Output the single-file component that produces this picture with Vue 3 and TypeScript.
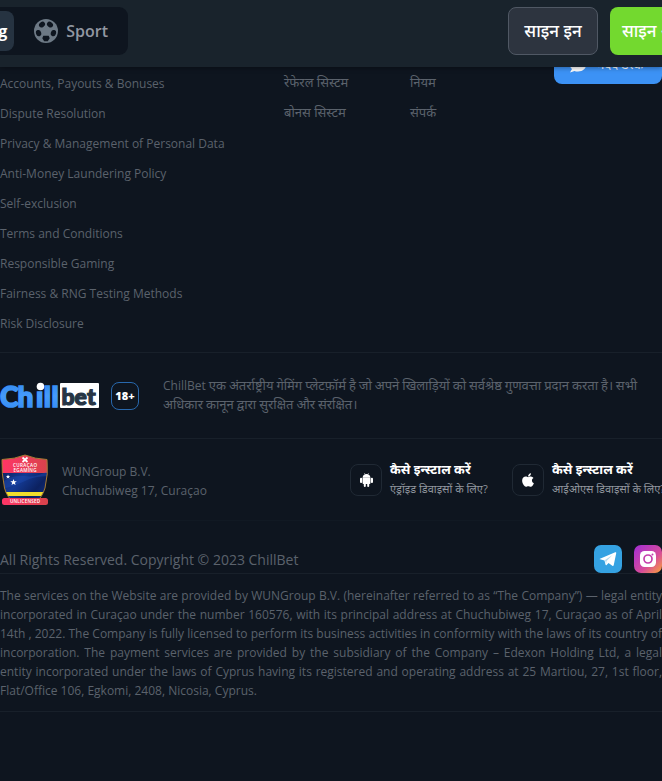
<script setup lang="ts">
interface InstallLink { id: 'android' | 'apple'; title: string; note: string }

const policies: string[] = [
  'Accounts, Payouts & Bonuses',
  'Dispute Resolution',
  'Privacy & Management of Personal Data',
  'Anti-Money Laundering Policy',
  'Self-exclusion',
  'Terms and Conditions',
  'Responsible Gaming',
  'Fairness & RNG Testing Methods',
  'Risk Disclosure',
]
const programs: string[] = ['रेफेरल सिस्टम', 'बोनस सिस्टम']
const info: string[] = ['नियम', 'संपर्क']
const installs: InstallLink[] = [
  { id: 'android', title: 'कैसे इन्स्टाल करें', note: 'एंड्रॉइड डिवाइसों के लिए?' },
  { id: 'apple', title: 'कैसे इन्स्टाल करें', note: 'आईओएस डिवाइसों के लिए?' },
]
</script>

<template>
  <div class="page">
    <header class="topbar">
      <nav class="tabs">
        <a class="tab tab-active">iGaming</a>
        <a class="tab">
          <svg class="ball" viewBox="0 0 24 24">
            <circle cx="12" cy="12" r="12" fill="#6d7985" />
            <g fill="#0e151f">
              <ellipse cx="8" cy="5.6" rx="3.2" ry="2.6" transform="rotate(-35 8 5.6)" />
              <ellipse cx="16" cy="5.6" rx="3.2" ry="2.6" transform="rotate(35 16 5.6)" />
              <ellipse cx="4.6" cy="14.1" rx="2.6" ry="3.2" transform="rotate(-18 4.6 14.1)" />
              <ellipse cx="19.4" cy="14.1" rx="2.6" ry="3.2" transform="rotate(18 19.4 14.1)" />
              <path d="M9.3 16.7h5.4l1 2.6-1.9 2.9h-3.6l-1.9-2.9z" />
            </g>
          </svg>
          <span>Sport</span>
        </a>
      </nav>
      <div class="auth">
        <button class="btn btn-in"><span>साइन इन</span></button>
        <button class="btn btn-up"><span>साइन अप</span></button>
      </div>
    </header>

    <footer class="footer">
      <section class="columns">
        <ul class="col col-policy">
          <li v-for="p in policies" :key="p">{{ p }}</li>
        </ul>
        <ul class="col col-program hi">
          <li v-for="p in programs" :key="p"><span>{{ p }}</span></li>
        </ul>
        <ul class="col col-info hi">
          <li v-for="p in info" :key="p"><span>{{ p }}</span></li>
        </ul>
        <a class="support">
          <svg width="18" height="16" viewBox="0 0 18 16"><path d="M9 0c5 0 8.400 3 8.400 7S14 14.500 9 14.500c-1.500 0-2.500 0-3.500-.5L1 15.500l2-3.500C1.500 10.800.6 9 .6 7 .6 3 4 0 9 0z" fill="#fff" /></svg>
          <span>मदद डेस्क</span>
        </a>
      </section>

      <section class="about">
        <svg class="logo" width="100" height="28" viewBox="0 0 100 28">
          <defs>
            <linearGradient id="chill" x1="0" y1="0" x2="0" y2="1">
              <stop offset="0" stop-color="#2f86ee" />
              <stop offset=".5" stop-color="#459bfb" />
              <stop offset="1" stop-color="#3289f2" />
            </linearGradient>
          </defs>
          <rect x="60" y="1" width="39" height="25" rx="1" fill="#fff" />
          <text class="logo-a" x="0 17.500 36 43.800 51.500" y="25" fill="url(#chill)" stroke="url(#chill)">Chıll</text>
          <circle cx="40.500" cy="4.500" r="3.800" fill="#fff" />
          <text class="logo-b" x="61.500 74.500 87" y="23" fill="#263545" stroke="#263545">bet</text>
        </svg>
        <span class="age">18+</span>
        <p class="about-text"><span class="brand">ChillBet</span> एक अंतर्राष्ट्रीय गेमिंग प्लेटफ़ॉर्म है जो अपने खिलाड़ियों को सर्वश्रेष्ठ गुणवत्ता प्रदान करता है। सभी<br>अधिकार कानून द्वारा सुरक्षित और संरक्षित।</p>
      </section>

      <section class="company">
        <svg class="license" width="48" height="52" viewBox="0 0 48 52">
          <defs>
            <linearGradient id="red" x1="0" x2="1"><stop offset="0" stop-color="#ff3566" /><stop offset="1" stop-color="#d8434b" /></linearGradient>
            <linearGradient id="blue" x1="0" x2="1" y2="1"><stop offset="0" stop-color="#0a1440" /><stop offset=".45" stop-color="#143a94" /><stop offset=".7" stop-color="#0c2160" /><stop offset="1" stop-color="#123690" /></linearGradient>
            <clipPath id="shield"><path d="M1 5.500Q14 5 24 1q10 4 22 4.500Q47.500 20 44 34 41 44 34 49H14Q6 44 3.500 34 .5 20 1 5.500z" /></clipPath>
          </defs>
          <g clip-path="url(#shield)">
            <rect width="48" height="52" fill="url(#blue)" />
            <rect width="48" height="19" fill="url(#red)" />
            <path d="M0 29Q12 20 24 22T48 16v6Q34 22 24 27T0 35z" fill="#2353bd" opacity=".35" />
            <path d="M0 38h48v4H0z" fill="#f1df2c" />
          </g>
          <path d="M1 5.500Q14 5 24 1q10 4 22 4.500Q47.500 20 44 34 41 44 34 49H14Q6 44 3.500 34 .5 20 1 5.500z" fill="none" stroke="#a77a32" />
          <path d="M21.500 3.500l5 4.500m0-4.500l-5 4.500" stroke="#fff" stroke-width="1.700" />
          <text x="12" y="13" class="seal" textLength="24" fill="#fff">CURAÇAO</text>
          <text x="12.500" y="18" class="seal" textLength="23" fill="#fff">EGAMING</text>
          <path d="M12.500 25l.9 2.200 2.400.1-1.900 1.500.7 2.300-2.100-1.300-2 1.300.7-2.300-1.900-1.500 2.400-.1z" fill="#fff" />
          <path d="M7 20.500l.6 1.500 1.600.1-1.300 1 .5 1.500L7 23.700l-1.300.9.4-1.500-1.200-1 1.600-.1z" fill="#fff" />
          <rect x="1" y="44" width="46" height="7" rx="2.500" fill="url(#red)" />
          <text x="9" y="49.300" class="seal" textLength="30" fill="#fff">UNLICENSED</text>
        </svg>
        <address class="address">WUNGroup B.V.<br>Chuchubiweg 17, Curaçao</address>
        <div class="installs">
          <a v-for="item in installs" :key="item.id" class="install" :class="item.id">
            <span class="install-icon">
              <svg v-if="item.id === 'android'" width="13" height="14" viewBox="0 0 13 14" fill="#fff">
                <path d="M2.700 4.300C2.700 2.500 4.300 1 6.500 1s3.800 1.500 3.800 3.300z" />
                <path d="M4.300 0l.9 1.400M8.700 0l-.9 1.400" stroke="#fff" stroke-width=".5" />
                <path d="M2.600 4.300h7.800v5.900c0 .5-.3.800-.8.800H3.400c-.5 0-.8-.3-.8-.8z" />
                <rect x="0" y="4.700" width="2.200" height="5.300" rx="1" /><rect x="10.800" y="4.700" width="2.200" height="5.300" rx="1" />
                <rect x="3.800" y="9" width="2" height="5" rx="1" /><rect x="7.200" y="9" width="2" height="5" rx="1" />
              </svg>
              <svg v-else width="12" height="14" viewBox="0 20 384 470" preserveAspectRatio="none" fill="#fff">
                <path d="M318.700 268.700c-.2-36.700 16.400-64.400 50-84.800-18.800-26.900-47.200-41.700-84.700-44.600-35.500-2.800-74.300 20.700-88.500 20.700-15 0-49.400-19.700-76.400-19.700C63.300 141.200 4 184.800 4 273.500q0 39.300 14.400 81.200c12.800 36.700 59 126.700 107.200 125.200 25.200-.6 43-17.900 75.800-17.900 31.800 0 48.300 17.900 76.400 17.900 48.600-.7 90.400-82.500 102.600-119.300-65.200-30.700-61.700-90-61.700-91.900zm-56.600-164.200c27.300-32.400 24.800-61.900 24-72.500-24.100 1.400-52 16.400-67.900 34.900-17.500 19.800-27.800 44.300-25.600 71.900 26.100 2 49.900-11.400 69.500-34.300z" />
              </svg>
            </span>
            <span class="install-text"><b>{{ item.title }}</b><small>{{ item.note }}</small></span>
          </a>
        </div>
      </section>

      <section class="rights">
        <span>All Rights Reserved. Copyright © 2023 ChillBet</span>
        <div class="social">
          <svg width="28" height="28" viewBox="0 0 28 28">
            <rect width="28" height="28" rx="7" fill="#35a2e2" />
            <path d="M6 13.700L21.200 7.300c.7-.3 1.200.1 1 .9l-2.500 12c-.2.800-.7 1-1.400.6l-3.800-2.800-1.900 1.900c-.6.600-1 .2-1.100-.3l-1-4-4.400-1.300c-.6-.2-.6-.4-.1-.6z" fill="#fff" />
            <path d="M11 15.100l7.500-5-5.900 6-.5 2.700z" fill="#b5dcf1" />
          </svg>
          <svg width="28" height="28" viewBox="0 0 28 28">
            <defs><linearGradient id="insta" x1="0" y1="0" x2="1" y2="1"><stop offset=".1" stop-color="#aa32cb" /><stop offset=".6" stop-color="#d64b9b" /><stop offset="1" stop-color="#fba338" /></linearGradient></defs>
            <rect width="28" height="28" rx="7" fill="url(#insta)" />
            <rect x="6" y="6" width="16" height="16" rx="4.500" fill="#fff" />
            <circle cx="14" cy="14" r="4" fill="none" stroke="#c43fae" stroke-width="1.700" />
            <circle cx="18.500" cy="9.500" r="1" fill="#c43fae" />
          </svg>
        </div>
      </section>

      <p class="legal">The services on the Website are provided by WUNGroup B.V. (hereinafter referred to as “The Company”) — legal entity incorporated in Curaçao under the number 160576, with its principal address at Chuchubiweg 17, Curaçao as of April 14th , 2022. The Company is fully licensed to perform its business activities in conformity with the laws of its country of incorporation. The payment services are provided by the subsidiary of the Company – Edexon Holding Ltd, a legal entity incorporated under the laws of Cyprus having its registered and operating address at 25 Martiou, 27, 1st floor, Flat/Office 106, Egkomi, 2408, Nicosia, Cyprus.</p>
    </footer>
  </div>
</template>

<style>
body { background: #0e151f; }
</style>

<style scoped>
* { box-sizing: border-box; }
.page { position: relative; width: 662px; height: 781px; overflow: hidden; background: #0e151f; color: #5b626c; font-family: "Open Sans", "Noto Sans Devanagari", sans-serif; font-size: 12px; }
.topbar { position: absolute; inset: 0 0 auto 0; height: 67px; padding-top: 7px; display: flex; background: #19232c; z-index: 2; box-shadow: 0 1px 5px rgba(0, 0, 0, .35); }
.tabs { width: 128px; height: 48px; padding: 4px; flex: none; display: flex; justify-content: flex-end; overflow: hidden; background: #0e151f; border-radius: 0 9px 9px 0; }
.tab { flex: none; height: 40px; padding: 0 16px 0 20px; display: flex; align-items: center; gap: 8px; color: #9297a2; font-size: 16px; font-weight: 600; }
.tab-active { padding: 0 7px 0 16px; background: #263341; border-radius: 8px; color: #fff; font-weight: 700; }
.ball { width: 24px; height: 24px; }
.auth { display: flex; gap: 12px; margin-left: 380px; }
.btn { flex: none; width: 90px; height: 48px; padding: 0; border-radius: 8px; border: 1px solid #505864; background: #2d343f; color: #fff; font: 500 17px "Open Sans", "Noto Sans Devanagari", sans-serif; white-space: nowrap; }
.btn-up { padding-left: 12px; text-align: left; border: 0; background: #73d92f; }
.footer { padding-top: 42px; }
.columns { height: 311px; display: flex; align-items: flex-start; border-bottom: 1px solid #18202a; }
.col { list-style: none; margin: 0; padding: 25px 0 0; }
.col li { height: 30px; line-height: 30px; white-space: nowrap; }
.col-policy { width: 284px; padding-top: 27px; }
.col-program { width: 126px; }
.col-info { width: 144px; }
.hi { font-size: 13px; }
.support { width: 108px; height: 42px; padding: 3px 4px 0 0; display: flex; align-items: center; justify-content: center; gap: 10px; border-radius: 8px; background: #3c92f5; color: #fff; font-size: 13px; white-space: nowrap; }
.about { height: 86px; display: flex; align-items: center; border-bottom: 1px solid #18202a; }
.logo-a { font: 900 28px Lato, sans-serif; stroke-width: 1.6px; }
.logo-b { font: 900 23px Lato, sans-serif; stroke-width: 1.2px; }
.logo { flex: none; }
.age { flex: none; width: 28px; height: 28px; margin-left: 11px; border: 1px solid #2868ad; border-radius: 8px; color: #fff; font-weight: 800; font-size: 11px; line-height: 26px; display: flex; justify-content: center; }
.about-text { margin: 0 0 0 24px; padding-bottom: 2px; font-size: 13px; line-height: 18px; white-space: nowrap; word-spacing: -.4px; }
.brand { font-size: 12px; }
.company { height: 82px; display: flex; align-items: center; border-bottom: 1px solid #111923; }
.license { margin: 0 13px 0 1px; flex: none; }
.seal { font: 600 4.600px "Open Sans"; }
.address { width: 288px; padding-top: 2px; font-style: normal; line-height: 19px; }
.installs { display: flex; gap: 22px; }
.install { display: flex; align-items: center; gap: 8px; white-space: nowrap; }
.install-icon { flex: none; width: 32px; height: 32px; display: flex; align-items: center; justify-content: center; border: 1px solid #202934; border-radius: 8px; }
.install-text { display: flex; flex-direction: column; width: 100px; padding-bottom: 2px; }
.install b { color: #fff; font-size: 13px; line-height: 20px; }
.install small { color: #91969e; font-size: 11px; line-height: 19px; }
.rights { height: 53px; padding-top: 24px; display: flex; justify-content: space-between; align-items: center; border-bottom: 1px solid #18202a; font-size: 14px; }
.social { display: flex; gap: 12px; }
.legal { margin: 0; height: 138px; padding-top: 12px; line-height: 19px; text-align: justify; border-bottom: 1px solid #18202a; }
</style>
